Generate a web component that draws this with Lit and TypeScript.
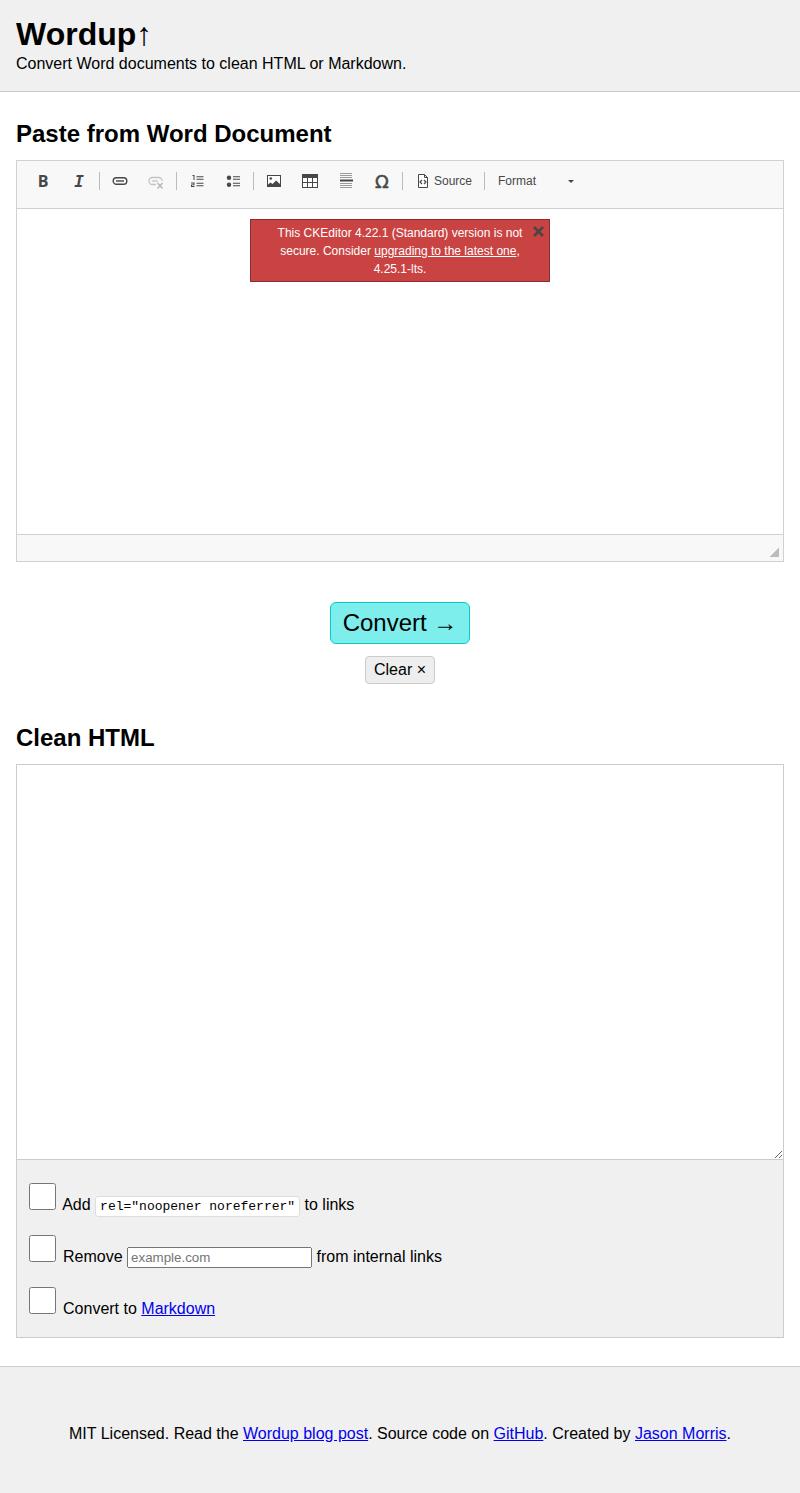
import { LitElement, html, css, svg } from "lit";
import { customElement } from "lit/decorators.js";

const icon = (body: unknown) =>
  html`<svg class="ico" viewBox="0 0 16 16" width="16" height="16">${body}</svg>`;

const linkIcon = svg`<g fill="none" stroke="#474747" stroke-width="1.400"><rect x="1.200" y="4.700" width="13.600" height="6.600" rx="3.300"/><path d="M4 8h8"/></g>`;
const unlinkIcon = svg`<g fill="none" stroke="#c4c4c4" stroke-width="1.300"><path d="M14 8V7.500a3 3 0 0 0-3-3H4.500a3.500 3.500 0 0 0 0 7H8"/><path d="M4 8h6"/><path d="M9.500 10l5 5.500m0-5.500l-5 5.500" stroke="#b4b4b4"/></g>`;
const olIcon = svg`<g fill="#474747"><path d="M3.500 2h2v5H4.500V3h-1zM2 9.500h3.500v2.800H3.100v.8h2.400V14H2v-2.500h2.400v-1.100H2z"/><path d="M7.500 3.200h7v1h-7zM7.500 5.800h7v1h-7zM7.500 9.800h7v1h-7zM7.500 12.200h7v1h-7z"/></g>`;
const ulIcon = svg`<g fill="#474747"><circle cx="4" cy="4.700" r="2.200"/><circle cx="4" cy="11.700" r="2.200"/><path d="M8 3.200h7v1H8zM8 5.800h7v1H8zM8 9.800h7v1H8zM8 12.200h7v1H8z"/></g>`;
const imageIcon = svg`<rect x="1.500" y="2.500" width="13" height="11" fill="#fff" stroke="#474747"/><path d="M2 13v-1.500l2.500-2 2 1.500 3.500-3.500 4 3.500V13z" fill="#474747"/><circle cx="4.800" cy="5.500" r="1.300" fill="#474747"/>`;
const tableIcon = svg`<rect x="0.500" y="1.500" width="15" height="13" fill="#fff" stroke="#474747"/><path d="M0 1h16v4H0z" fill="#474747"/><path d="M0 9.500h16M5.500 5v10M10.500 5v10" stroke="#474747"/>`;
const hrIcon = svg`<path d="M2 0.500h12M2 2.500h12M2 4.500h12M2 10.500h12M2 12.500h12M2 14.500h12" stroke="#9a9a9a"/><path d="M2 6.500h13v2H2z" fill="#474747"/>`;
const sourceIcon = svg`<path d="M3.500 1.500h6l3 3v10h-9z" fill="#fff" stroke="#474747"/><path d="M9.500 1.500v3h3" fill="none" stroke="#474747"/><path d="M7 7L5 9l2 2M9 7l2 2-2 2" fill="none" stroke="#474747" stroke-width="1.200"/>`;

@customElement("app-root")
export class AppRoot extends LitElement {
  static styles = css`
    :host {
      display: block;
      font-family: "Liberation Sans", Arial, sans-serif;
      font-size: 16px;
      color: #000;
      background: #fff;
    }
    header {
      background: #f0f0f0;
      border-bottom: 1px solid #ccc;
      padding: 16px 16px 0;
      box-sizing: border-box;
      height: 92px;
    }
    h1 {
      margin: 0 0 2px;
      font-size: 32px;
      line-height: 37px;
    }
    h1 span {
      font-weight: normal;
    }
    header p {
      margin: 0;
      line-height: 18px;
    }
    main {
      padding: 0 16px;
    }
    h2 {
      margin: 0;
      font-size: 24px;
      line-height: 28px;
    }
    .paste-title {
      padding-top: 28px;
      padding-bottom: 12px;
    }
    .editor {
      border: 1px solid #d1d1d1;
      background: #fff;
      position: relative;
    }
    .toolbar {
      display: flex;
      align-items: flex-start;
      box-sizing: border-box;
      padding: 6px 8px 0;
      background: #f8f8f8;
      border-bottom: 1px solid #d1d1d1;
      height: 48px;
    }
    .btn {
      width: 36px;
      height: 28px;
      display: flex;
      align-items: center;
      justify-content: center;
      flex: none;
      color: #474747;
    }
    .ico {
      display: block;
    }
    .glyph-b {
      font: bold 16px "Open Sans", sans-serif;
    }
    .glyph-i {
      font: italic bold 16px "DejaVu Sans Mono", monospace;
    }
    .glyph-o {
      font: 18px "DejaVu Sans", sans-serif;
      -webkit-text-stroke: 0.5px #474747;
    }
    .sep {
      flex: none;
      width: 1px;
      height: 18px;
      margin: 5px 2px 0;
      background: #bcbcbc;
    }
    .text-btn {
      display: flex;
      align-items: center;
      height: 28px;
      padding: 0 10px;
      gap: 3px;
      font-size: 12px;
      color: #484848;
    }
    .combo {
      display: flex;
      align-items: center;
      width: 95px;
      height: 28px;
      padding-left: 11px;
      font-size: 12px;
      color: #484848;
      position: relative;
    }
    .combo i {
      position: absolute;
      left: 81px;
      top: 13px;
      border: 3px solid transparent;
      border-top-color: #484848;
      border-bottom: 0;
    }
    .content {
      height: 325px;
    }
    .notice {
      position: absolute;
      top: 58px;
      left: 233px;
      width: 300px;
      height: 63px;
      box-sizing: border-box;
      padding: 4px 20px;
      background: #c94343;
      border: 1px solid #902b2b;
      color: #fff;
      font-size: 12px;
      line-height: 18px;
      text-align: center;
    }
    .notice a {
      color: #fff;
    }
    .notice svg {
      position: absolute;
      top: 6px;
      right: 5px;
    }
    .status {
      height: 26px;
      background: #f8f8f8;
      border-top: 1px solid #d1d1d1;
      position: relative;
    }
    .status svg {
      position: absolute;
      right: 4px;
      bottom: 4px;
    }
    .actions {
      display: flex;
      flex-direction: column;
      align-items: center;
      gap: 12px;
      padding-top: 40px;
    }
    button {
      font-family: inherit;
      color: #000;
      cursor: pointer;
    }
    .convert {
      width: 140px;
      height: 42px;
      box-sizing: border-box;
      padding: 0;
      font-size: 24px;
      background: #7eeeec;
      border: 1px solid #00cccc;
      border-radius: 6px;
    }
    .clear {
      width: 70px;
      height: 28px;
      box-sizing: border-box;
      padding: 0;
      font-size: 16px;
      background: #eee;
      border: 1px solid #ccc;
      border-radius: 4px;
    }
    .clean-title {
      padding-top: 40px;
      padding-bottom: 12px;
    }
    textarea {
      display: block;
      width: 100%;
      height: 396px;
      box-sizing: border-box;
      margin: 0;
      padding: 2px;
      border: 1px solid #ccc;
      outline: none;
    }
    .options {
      margin-top: -1px;
      background: #f0f0f0;
      border: 1px solid #ccc;
      padding: 20px 8px 0;
      height: 179px;
      box-sizing: border-box;
    }
    .options p {
      margin: 0;
      height: 52px;
      line-height: 18px;
    }
    .options input[type="checkbox"] {
      width: 27px;
      height: 27px;
      margin: 3px 2.6px 3px 4px;
    }
    .options input[type="text"] {
      width: 185px;
      height: 21px;
      box-sizing: border-box;
      padding: 1px 2px;
      font: 13.33px "Liberation Sans", sans-serif;
    }
    code {
      font: 13px "Liberation Mono", monospace;
      background: #fff;
      border: 1px solid #ddd;
      border-radius: 3px;
      padding: 2px 4px;
    }
    footer {
      margin-top: 28px;
      height: 127px;
      box-sizing: border-box;
      padding-top: 8px;
      background: #f0f0f0;
      border-top: 1px solid #ccc;
      display: flex;
      align-items: center;
      justify-content: center;
    }
  `;

  render() {
    return html`
      <header>
        <h1>Wordup<span>↑</span></h1>
        <p>Convert Word documents to clean HTML or Markdown.</p>
      </header>
      <main>
        <h2 class="paste-title">Paste from Word Document</h2>
        <div class="editor">
          <div class="toolbar">
            <span class="btn glyph-b">B</span>
            <span class="btn glyph-i">I</span>
            <span class="sep"></span>
            <span class="btn">${icon(linkIcon)}</span>
            <span class="btn">${icon(unlinkIcon)}</span>
            <span class="sep"></span>
            <span class="btn">${icon(olIcon)}</span>
            <span class="btn">${icon(ulIcon)}</span>
            <span class="sep"></span>
            <span class="btn">${icon(imageIcon)}</span>
            <span class="btn">${icon(tableIcon)}</span>
            <span class="btn">${icon(hrIcon)}</span>
            <span class="btn glyph-o">Ω</span>
            <span class="sep"></span>
            <span class="text-btn">${icon(sourceIcon)}Source</span>
            <span class="sep"></span>
            <span class="combo">Format<i></i></span>
          </div>
          <div class="content"></div>
          <div class="notice">
            This CKEditor 4.22.1 (Standard) version is not secure. Consider
            <a href="#">upgrading to the latest one</a>, 4.25.1-lts.
            <svg width="11" height="11" viewBox="0 0 11 11">
              <path d="M1 1l9 9M10 1l-9 9" stroke="#4e4446" stroke-width="2.600" />
            </svg>
          </div>
          <div class="status">
            <svg width="10" height="10" viewBox="0 0 10 10" shape-rendering="crispEdges">
              <path d="M10 0v10H0z" fill="#bcbcbc" />
            </svg>
          </div>
        </div>
        <div class="actions">
          <button class="convert">Convert →</button>
          <button class="clear">Clear ×</button>
        </div>
        <h2 class="clean-title">Clean HTML</h2>
        <textarea></textarea>
        <div class="options">
          <p>
            <input type="checkbox" /> Add
            <code>rel="noopener noreferrer"</code> to links
          </p>
          <p>
            <input type="checkbox" /> Remove
            <input type="text" placeholder="example.com" /> from internal links
          </p>
          <p>
            <input type="checkbox" /> Convert to <a href="#">Markdown</a>
          </p>
        </div>
      </main>
      <footer>
        <span>
          MIT Licensed. Read the <a href="#">Wordup blog post</a>. Source code
          on <a href="#">GitHub</a>. Created by <a href="#">Jason Morris</a>.
        </span>
      </footer>
    `;
  }
}
